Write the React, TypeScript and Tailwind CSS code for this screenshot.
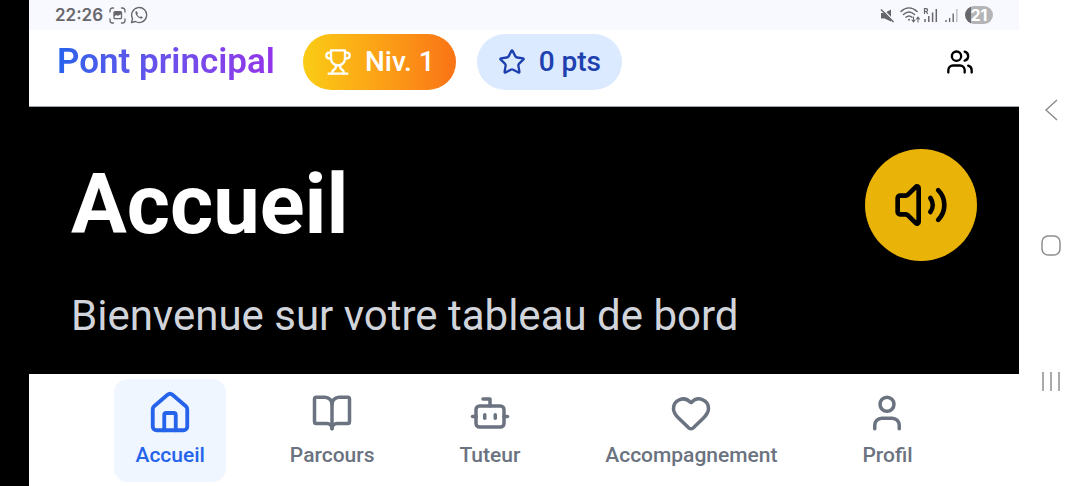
import React from 'react';
import { BookOpen, Bot, Heart, House, Star, User, Users, Volume2 } from 'lucide-react';

const tabs = [
  { label: 'Accueil', icon: House },
  { label: 'Parcours', icon: BookOpen },
  { label: 'Tuteur', icon: Bot },
  { label: 'Accompagnement', icon: Heart },
  { label: 'Profil', icon: User },
];

const StatusBar = () => (
  <div className="flex h-[30px] items-center justify-between bg-[#f8f8ff] px-[26px] text-[#67676b]">
    <div className="flex items-center gap-1">
      <span className="mr-0.5 font-['Inter',sans-serif] text-[17px] leading-5 font-semibold">22:26</span>
      <svg width="17" height="17" viewBox="0 0 17 17" fill="none" stroke="currentColor" strokeWidth="1.3" strokeLinecap="round">
        <path d="M1 5V3.5A2.5 2.5 0 0 1 3.5 1H4.5M12.5 1h1A2.5 2.5 0 0 1 16 3.5V5M16 12v1.5a2.5 2.5 0 0 1-2.5 2.5h-1M4.5 16h-1A2.5 2.5 0 0 1 1 13.5V12" />
        <rect x="5" y="4.7" width="7.5" height="7" rx="1" />
        <path d="M5 9.2l2-1 2 .6 3-1.5V5H5z" fill="currentColor" stroke="none" />
      </svg>
      <svg width="18" height="18" viewBox="0 0 24 24" fill="none" stroke="currentColor" strokeWidth="1.8" strokeLinejoin="round">
        <path d="M2 22l1.4-5.2A10 10 0 1 1 7.2 20.7z" />
        <path d="M8.5 6.8c-1 .5-1.5 1.5-1.2 2.8.7 3.3 3.6 6.3 7 7 1.3.3 2.5-.4 2.9-1.7l-2.6-1.4-1.2 1.2c-1.7-.7-3-2-3.8-3.8l1.1-1.2z" fill="currentColor" stroke="none" />
      </svg>
    </div>
    <div className="flex items-center gap-[3px]">
      <svg className="mr-0.5" width="15" height="15" viewBox="0 0 15 15">
        <path d="M1 5h3.5L11 1.5v12L4.5 10.5H1z" fill="currentColor" />
        <path d="M2 .5l12 12.5" stroke="#f8f8ff" strokeWidth="1.4" />
        <path d="M1 1.5l12.5 12.5" stroke="currentColor" strokeWidth="1.5" />
      </svg>
      <svg width="20" height="16" viewBox="0 0 20 16" fill="none" stroke="currentColor" strokeWidth="1.5" strokeLinecap="round">
        <path d="M1 4.5c5-4.6 11-4.6 16 0M3.5 7.5c3.5-3.2 7.5-3.2 11 0M6 10.3c2-1.8 4-1.8 6 0" />
        <circle cx="9" cy="12.8" r="1" fill="currentColor" stroke="none" />
        <path d="M13.5 10v4.5M12 13l1.5 1.8L15 13M18 15v-4.5M16.5 12L18 10.2 19.5 12" strokeWidth="1.1" />
      </svg>
      <svg width="15" height="16" viewBox="0 0 15 16" fill="none" stroke="currentColor" strokeWidth="1.5">
        <path d="M2 15v-3M5.8 15V9M9.6 15V5.5M13.3 15V2" />
        <path d="M1.5 7V1.7h1.7a1.3 1.3 0 0 1 0 2.8H1.5M3.2 4.5L4.7 7" strokeWidth="1.2" />
      </svg>
      <svg className="mx-1" width="13" height="16" viewBox="0 0 13 16" fill="none" stroke="currentColor" strokeWidth="1.4">
        <path d="M1 15v-2M4.6 15v-4M8.2 15V6.5" />
        <path d="M11.8 15V2" opacity=".4" />
      </svg>
      <span className="flex h-[18px] w-7 items-center justify-center rounded-full bg-linear-to-r from-[#67676b] from-20% to-[#b4b4b7] to-20% font-['Inter',sans-serif] text-base leading-4 font-bold text-white">
        21
      </span>
    </div>
  </div>
);

const Trophy = () => (
  <svg width="28" height="28" viewBox="0 0 24 24" fill="none" stroke="currentColor" strokeWidth="2" strokeLinecap="round" strokeLinejoin="round">
    <path d="M6 9H4.5a2.5 2.5 0 0 1 0-5H6" />
    <path d="M18 9h1.5a2.5 2.5 0 0 0 0-5H18" />
    <path d="M4 22h16" />
    <path d="M10 14.66V17c0 .55-.47.98-.97 1.21C7.85 18.75 7 20.24 7 22" />
    <path d="M14 14.66V17c0 .55.47.98.97 1.21C16.15 18.75 17 20.24 17 22" />
    <path d="M18 2H6v7a6 6 0 0 0 12 0V2Z" />
  </svg>
);

const Header = () => (
  <header className="flex items-start justify-between border-b border-gray-400 bg-white pt-1 pr-[45px] pb-4 pl-7">
    <div className="flex items-center">
      <span className="mr-7 bg-linear-to-r from-[#2563eb] to-[#9333ea] bg-clip-text text-[35px] leading-[56px] font-semibold text-transparent">
        Pont principal
      </span>
      <span className="mr-[21px] flex h-14 items-center gap-[13px] rounded-full bg-linear-to-r from-[#facc15] to-[#f97316] px-[21px] text-[28px] leading-10 font-medium text-white">
        <Trophy />
        Niv. 1
      </span>
      <span className="flex h-14 items-center gap-[13px] rounded-full bg-[#dbeafe] px-[21px] text-[28px] leading-10 font-medium text-[#1e40af]">
        <Star size={28} />
        0 pts
      </span>
    </div>
    <button type="button" aria-label="Utilisateurs" className="flex h-14 items-center text-black">
      <Users size={28} />
    </button>
  </header>
);

const Hero = () => (
  <main className="flex flex-1 items-start justify-between bg-black pt-[42px] pr-[42px] pb-6 pl-[42px]">
    <div>
      <h1 className="text-[83px] leading-[112px] font-bold text-white">Accueil</h1>
      <p className="mt-6 text-[42px] leading-[62px] text-[#d1d5db]">Bienvenue sur votre tableau de bord</p>
    </div>
    <button
      type="button"
      aria-label="Lire la page"
      className="flex size-28 items-center justify-center rounded-full bg-[#eab308] text-black"
    >
      <Volume2 size={56} />
    </button>
  </main>
);

const TabBar = () => (
  <nav className="flex justify-around bg-white px-16 pt-[5px] pb-1">
    {tabs.map(({ label, icon: Icon }, i) => (
      <a
        key={label}
        href="#"
        aria-current={i === 0 ? 'page' : undefined}
        className={`flex flex-col items-center rounded-[14px] px-[21px] pb-[13px] text-[21px] leading-7 font-medium ${
          i === 0 ? 'bg-[#eff6ff] text-[#2563eb]' : 'text-[#6b7280]'
        }`}
      >
        <span className="flex h-[62px] items-end pb-[5px]">
          <span className="flex h-[46px] items-center">
            <Icon size={i === 0 ? 46 : 42} />
          </span>
        </span>
        {label}
      </a>
    ))}
  </nav>
);

const SystemKeys = () => (
  <div className="flex w-[61px] shrink-0 flex-col items-center justify-between bg-white pt-[98px] pb-[93px] pl-0.5 text-[#8e8e8e]">
    <button type="button" aria-label="Retour">
      <svg width="24" height="24" viewBox="0 0 24 24" fill="none" stroke="currentColor" strokeWidth="1.5">
        <path d="M18 2L7 12l11 10" />
      </svg>
    </button>
    <button type="button" aria-label="Écran d'accueil">
      <svg width="24" height="24" viewBox="0 0 24 24" fill="none" stroke="currentColor" strokeWidth="1.5">
        <rect x="3" y="2" width="18" height="19" rx="6" />
      </svg>
    </button>
    <button type="button" aria-label="Applications récentes">
      <svg width="24" height="24" viewBox="0 0 24 24" fill="none" stroke="currentColor" strokeWidth="1.5">
        <path d="M4 3v19M12 3v19M20 3v19" />
      </svg>
    </button>
  </div>
);

const App = () => {
  return (
    <div className="flex min-h-screen bg-white font-['Roboto',sans-serif]">
      <div className="w-[29px] shrink-0 bg-black" />
      <div className="flex min-w-0 flex-1 flex-col">
        <StatusBar />
        <Header />
        <Hero />
        <TabBar />
      </div>
      <SystemKeys />
    </div>
  );
};

export default App;
